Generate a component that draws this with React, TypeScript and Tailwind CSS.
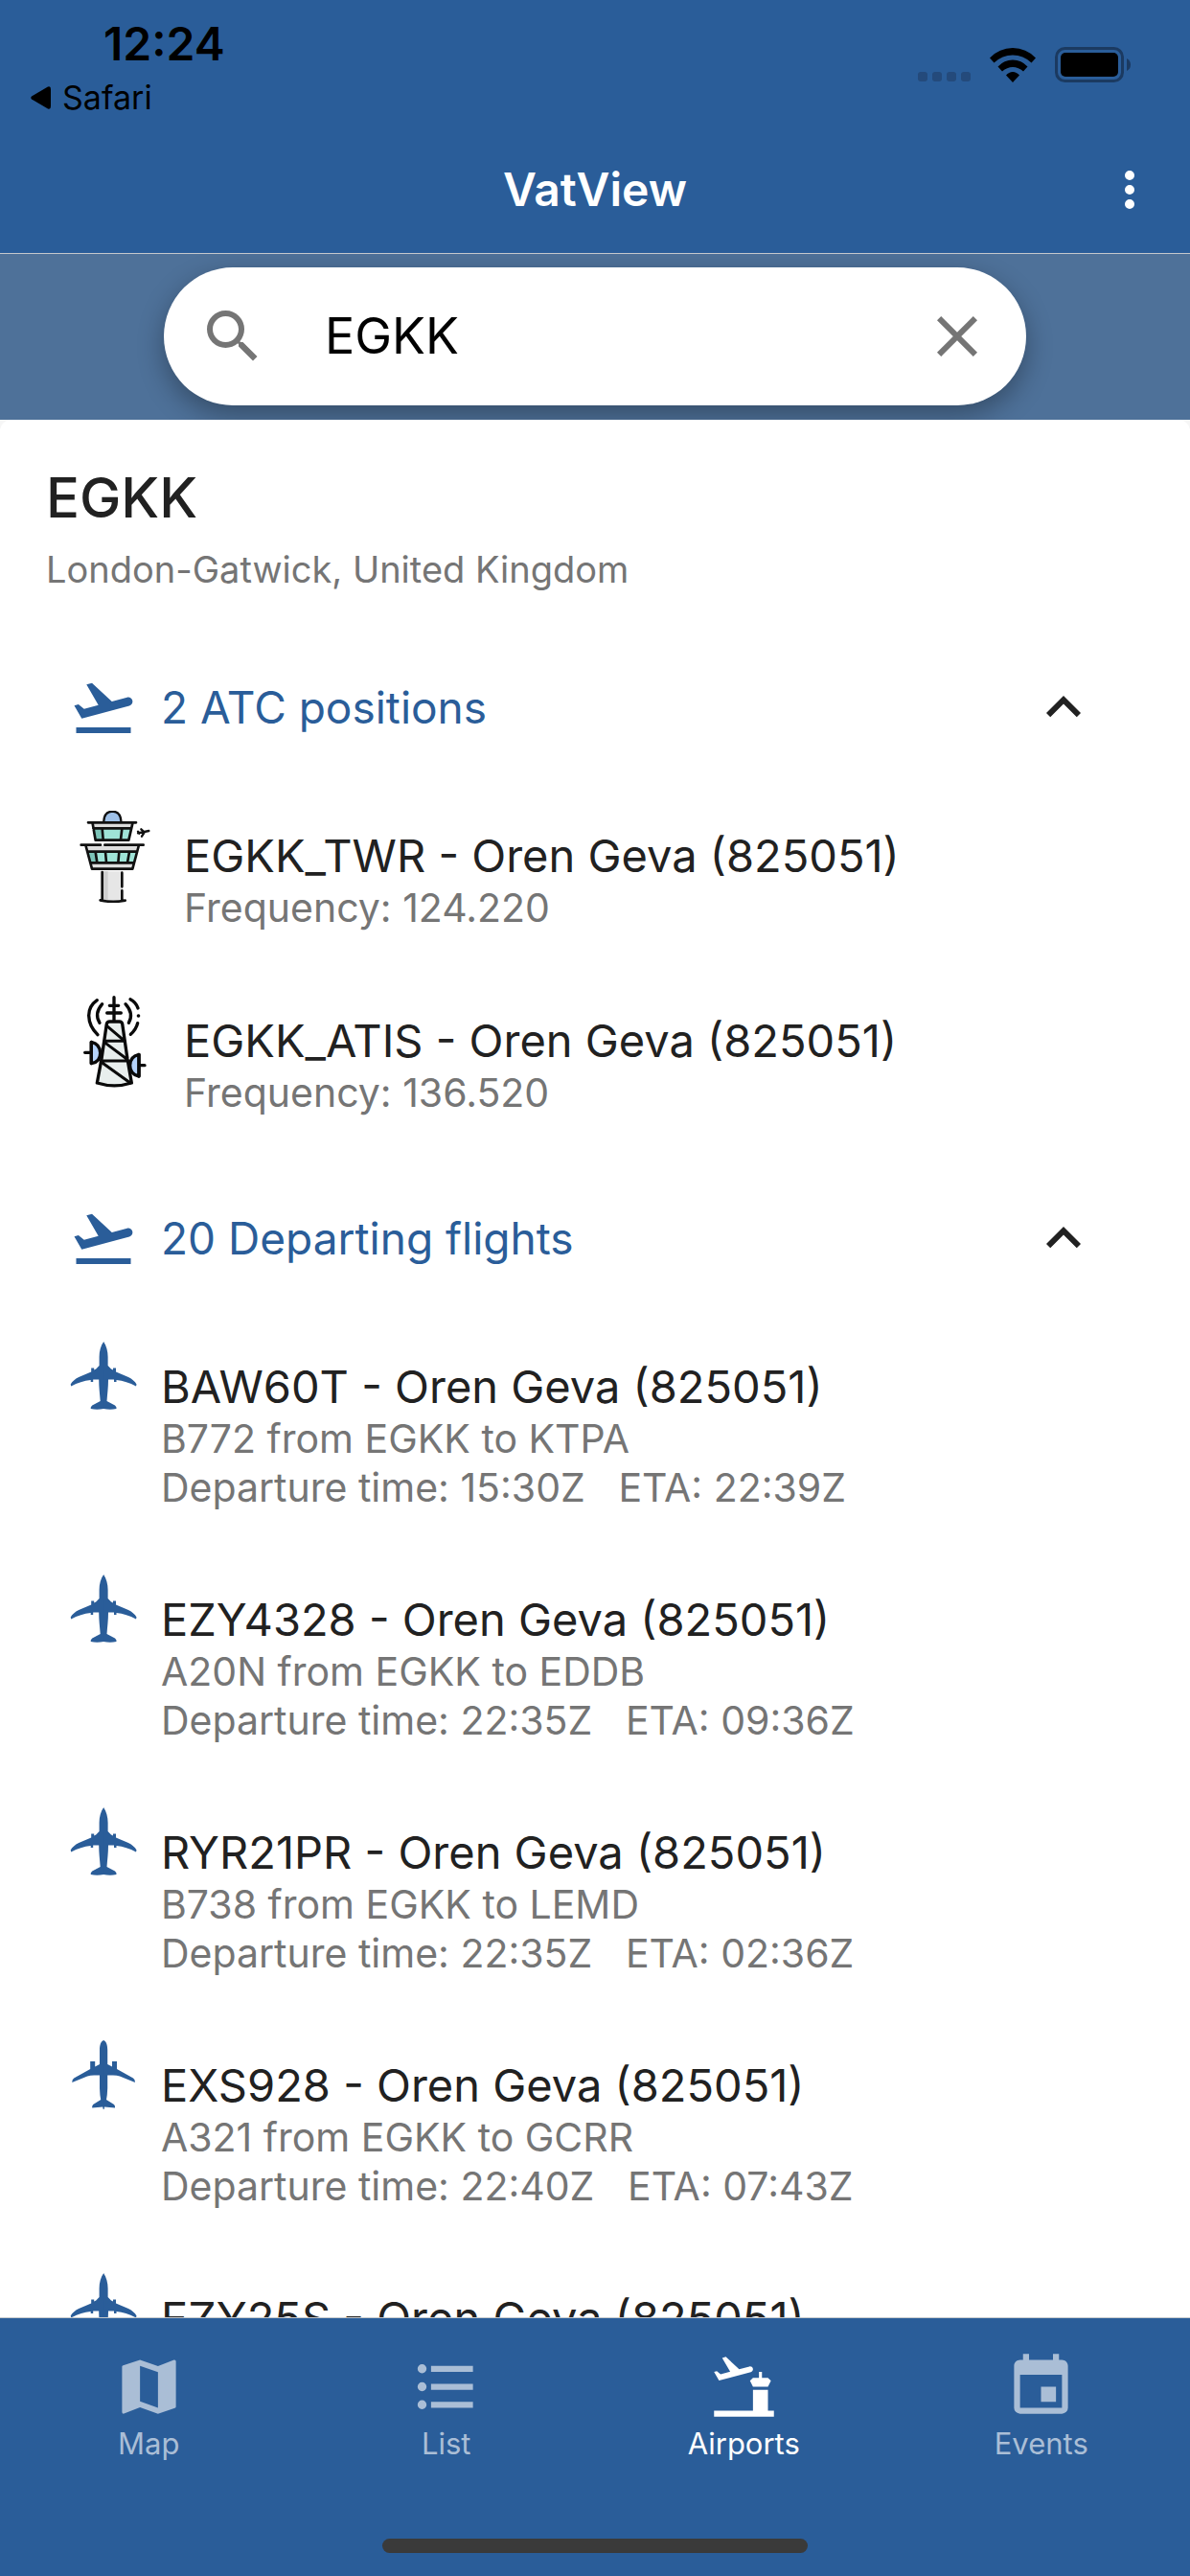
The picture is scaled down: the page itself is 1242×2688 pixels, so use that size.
import React, { useState } from 'react'

const icons = {
  magnify: 'M9.5,3A6.5,6.5 0 0,1 16,9.5C16,11.11 15.41,12.59 14.44,13.73L14.71,14H15.5L20.5,19L19,20.5L14,15.5V14.71L13.73,14.44C12.59,15.41 11.11,16 9.5,16A6.5,6.5 0 0,1 3,9.5A6.5,6.5 0 0,1 9.5,3M9.5,5C7,5 5,7 5,9.5C5,12 7,14 9.5,14C12,14 14,12 14,9.5C14,7 12,5 9.5,5Z',
  close: 'M19,6.41L17.59,5L12,10.59L6.41,5L5,6.41L10.59,12L5,17.59L6.41,19L12,13.41L17.59,19L19,17.59L13.41,12L19,6.41Z',
  dots: 'M12,16A2,2 0 0,1 14,18A2,2 0 0,1 12,20A2,2 0 0,1 10,18A2,2 0 0,1 12,16M12,10A2,2 0 0,1 14,12A2,2 0 0,1 12,14A2,2 0 0,1 10,12A2,2 0 0,1 12,10M12,4A2,2 0 0,1 14,6A2,2 0 0,1 12,8A2,2 0 0,1 10,6A2,2 0 0,1 12,4Z',
  chevronUp: 'M7.41,15.41L12,10.83L16.59,15.41L18,14L12,8L6,14L7.41,15.41Z',
  takeoff: 'M2.5,19H21.5V21H2.5V19M22.07,9.64C21.86,8.84 21.03,8.36 20.23,8.58L14.92,10L8,3.57L6.09,4.08L10.23,11.25L5.26,12.58L3.29,11.04L1.84,11.43L3.66,14.59L4.43,15.92L6.03,15.5L11.34,14.07L15.69,12.91L21,11.5C21.81,11.26 22.28,10.44 22.07,9.64Z',
  map: 'M15,19L9,16.89V5L15,7.11M20.5,3C20.44,3 20.39,3 20.34,3L15,5.1L9,3L3.36,4.9C3.15,4.97 3,5.15 3,5.38V20.5A0.5,0.5 0 0,0 3.5,21C3.55,21 3.61,21 3.66,20.97L9,18.9L15,21L20.64,19.1C20.85,19 21,18.85 21,18.62V3.5A0.5,0.5 0 0,0 20.5,3Z',
  list: 'M7,5H21V7H7V5M7,13V11H21V13H7M4,4.5A1.5,1.5 0 0,1 5.5,6A1.5,1.5 0 0,1 4,7.5A1.5,1.5 0 0,1 2.5,6A1.5,1.5 0 0,1 4,4.5M4,10.5A1.5,1.5 0 0,1 5.5,12A1.5,1.5 0 0,1 4,13.5A1.5,1.5 0 0,1 2.5,12A1.5,1.5 0 0,1 4,10.5M7,19V17H21V19H7M4,16.5A1.5,1.5 0 0,1 5.5,18A1.5,1.5 0 0,1 4,19.5A1.5,1.5 0 0,1 2.5,18A1.5,1.5 0 0,1 4,16.5Z',
  airport: 'M14.97,5.92C14.83,5.41 14.3,5.1 13.79,5.24L10.39,6.15L5.95,2.03L4.72,2.36L7.38,6.95L4.19,7.8L2.93,6.82L2,7.07L3.66,9.95L14.28,7.11C14.8,6.96 15.1,6.43 14.97,5.92M21,10L20,12H15L14,10L15,9H17V7H18V9H20L21,10M22,20V22H2V20H15V13H20V20H22Z',
  calendar: 'M19,19H5V8H19M16,1V3H8V1H6V3H5C3.89,3 3,3.89 3,5V19A2,2 0 0,0 5,21H19A2,2 0 0,0 21,19V5C21,3.89 20.1,3 19,3H18V1M17,12H12V17H17V12Z',
}

const Icon = ({ name, className }: { name: keyof typeof icons; className: string }) => (
  <svg viewBox="0 0 24 24" fill="currentColor" className={className} aria-hidden="true">
    <path d={icons[name]} />
  </svg>
)

// wide body and most narrow bodies
const JetIcon = () => {
  const half = 'M36 0C39 4 40.6 10 40.6 16V25L44 28.5L46 29.5V27.5H49V31.5L62 37Q68 40 70.5 44.5L70 46.5Q60 41 49.5 40V42H47V39.5H41C41 48 40 55 39.5 62L48 66.5Q50 68 49.5 70Q43 71.5 36 70Z'
  return (
    <svg viewBox="0 0 72 72" fill="currentColor" className="size-[72px]" aria-hidden="true">
      <path d={half} />
      <path d={half} transform="matrix(-1 0 0 1 72.2 0)" />
    </svg>
  )
}

// engines ahead of the wing
const TwinJetIcon = () => {
  const half = 'M36 0C39 1 40.2 5 40.2 10V25L45 27.5V22H50V30L67 39.5Q69 40.5 69 44L53 37.5Q50 36.5 46 36.5H40.2V50Q40 57 39 62L47 67Q48.5 68.5 48 70.5L37 69.5L36.5 72H36Z'
  return (
    <svg viewBox="0 0 72 72" fill="currentColor" className="size-[72px]" aria-hidden="true">
      <path d={half} />
      <path d={half} transform="matrix(-1 0 0 1 72.2 0)" />
    </svg>
  )
}

const TowerIcon = () => (
  <svg viewBox="36 78 288 288" className="size-24" strokeLinecap="round" strokeLinejoin="round" aria-hidden="true">
    <path d="M140 268H204V360Q172 365 140 360Z" fill="#e6e6e6" />
    <path d="M140 268H158V362L140 360Z" fill="#cfcfcf" />
    <path d="M145 112Q147 81 172 80Q197 81 199 112Z" fill="#9fc1e8" />
    <path d="M145 110Q147 81 172 80Q197 81 199 110" fill="none" stroke="#111" strokeWidth="7" />
    <path d="M106 116H236L223 173H117Z" fill="#dcdcdc" />
    <path d="M113 134H230L222 169H121Z" fill="#9fe3d7" />
    <path d="M113 134H138L140 169H121Z" fill="#7cc4b8" />
    <path d="M96 115H246M110 118L119 170M235 118L223 170M112 133H231M120 170H222M140 134L143 168M202 134L198 168" fill="none" stroke="#111" strokeWidth="8" />
    <path d="M88 187H256L236 261H108Z" fill="#dedede" />
    <path d="M95 207H249L239 240H104Z" fill="#9fe3d7" />
    <path d="M95 207H118L123 240H104Z" fill="#7cc4b8" />
    <path d="M74 185H135M148 185H269M89 189L108 260H235L254 189M96 206H248M104 241H240M119 207L124 240M150 207L153 240M193 207L190 240M225 207L219 240" fill="none" stroke="#111" strokeWidth="8" />
    <path d="M140 270V358M202 272V316M202 328V358M134 358Q172 367 212 359" fill="none" stroke="#111" strokeWidth="8" />
    <path d="M252 148L286 141M262 136L272 145M264 158L272 146M252 143L256 149" fill="none" stroke="#111" strokeWidth="7" />
  </svg>
)

const AntennaIcon = () => (
  <svg viewBox="36 72 288 288" className="size-24" fill="none" stroke="#0a0a0a" strokeLinecap="round" strokeLinejoin="round" aria-hidden="true">
    <path d="M106 217Q134 224 134 251Q134 280 106 284Z" fill="#b5d3fb" strokeWidth="10" />
    <path d="M255 256Q227 262 227 290Q227 318 255 324Z" fill="#b5d3fb" strokeWidth="10" />
    <path d="M154 160Q156 153 163 153H194Q201 153 203 160L219 270L232 345Q178 362 124 345L138 270Z" fill="#e8eeed" strokeWidth="10" />
    <path d="M147 214H210M138 276H219M154 166L208 212M147 218L217 270M136 279L228 345" strokeWidth="9" />
    <path d="M177 77V150M163 103H191M155 126H199" strokeWidth="10" />
    <path d="M86 250H104M257 290H273M106 217V284M255 256V324" strokeWidth="10" />
    <path d="M140 98Q114 128 132 157M213 98Q240 128 223 157" strokeWidth="10" />
    <path d="M124 86Q98 104 98 134Q99 169 126 194M228 83Q246 92 252 111M251 158Q246 178 229 193M253 135H254" strokeWidth="10" />
  </svg>
)

const StatusBar = () => (
  <div className="flex h-[132px] items-start justify-between pl-8 pr-[61px] text-black">
    <div>
      <div className="pt-4 pl-[76px] text-[48px] leading-[60px] font-semibold">12:24</div>
      <a href="#" className="flex items-center gap-[12px] text-[34px] leading-[52px]">
        <svg viewBox="0 0 21 24" className="h-6 w-[21px]" aria-hidden="true">
          <path d="M1 10.5L18 .5Q21 -.5 21 3V21Q21 24.500 18 23.500L1 13.500Q-.5 12 1 10.500Z" />
        </svg>
        Safari
      </a>
    </div>
    <div className="flex items-end gap-5 pt-[49px]">
      <div className="flex gap-[5px] pb-px">
        {[0, 1, 2, 3].map((dot) => (
          <span key={dot} className="size-[10px] rounded-[3px] bg-[#244a7b]" />
        ))}
      </div>
      <svg viewBox="0 0 48 36" className="h-9 w-12" aria-hidden="true">
        <path d="M0 10.500Q10 0 24 0T48 10.500L43.500 15.500Q35 7.500 24 7.500T4.500 15.500ZM8.500 19.500Q15 12.500 24 12.500T39.500 19.500L35 24.500Q30 20 24 20T13 24.500ZM17 28.500Q20 25 24 25T31 28.500L24 36Z" />
      </svg>
      <svg viewBox="0 0 80 37" className="h-[37px] w-20" aria-hidden="true">
        <rect x="1.500" y="1.500" width="69" height="34" rx="9" fill="none" stroke="#1b3a61" strokeWidth="3" />
        <rect x="6" y="6" width="60" height="25" rx="5" />
        <path d="M75 12Q79 14 79 18.500T75 25Z" fill="#1b3a61" />
      </svg>
    </div>
  </div>
)

const Header = () => (
  <header className="border-b border-[#c4c8cc] bg-[#2a5d99]">
    <StatusBar />
    <div className="grid h-[132px] grid-cols-[1fr_auto_1fr] items-center">
      <h1 className="col-start-2 text-[48px] leading-[60px] font-semibold text-white">VatView</h1>
      <button type="button" aria-label="Menu" className="mr-[33px] justify-self-end text-white">
        <Icon name="dots" className="size-[60px]" />
      </button>
    </div>
  </header>
)

const SearchBar = () => {
  const [query, setQuery] = useState('EGKK')
  return (
    <div className="flex justify-center overflow-hidden bg-[#4e7199] px-12 pt-[14px] pb-[15px]">
      <div className="flex h-36 w-[900px] items-center rounded-full bg-white px-9 text-[#757575] shadow-[0_10px_28px_rgba(0,0,0,0.32)]">
        <button type="button" aria-label="Search">
          <Icon name="magnify" className="size-[72px]" />
        </button>
        <input
          type="text"
          aria-label="Search airport"
          value={query}
          onChange={(e) => setQuery(e.target.value)}
          className="min-w-0 flex-1 bg-transparent pl-[60px] text-[52px] text-black outline-none"
        />
        <button type="button" aria-label="Clear" onClick={() => setQuery('')}>
          <Icon name="close" className="size-[72px]" />
        </button>
      </div>
    </div>
  )
}

const Accordion = ({ title, children }: { title: string; children: React.ReactNode }) => {
  const [open, setOpen] = useState(true)
  return (
    <section>
      <button
        type="button"
        aria-expanded={open}
        onClick={() => setOpen(!open)}
        className="flex w-full items-center gap-6 py-12 pr-24 pl-[72px] text-left text-[#2a5d99]"
      >
        <Icon name="takeoff" className="size-[72px]" />
        <span className="flex-1 text-[46px] leading-[60px]">{title}</span>
        <Icon name="chevronUp" className="size-[72px] text-[#212121]" />
      </button>
      {open && <ul>{children}</ul>}
    </section>
  )
}

const positions = [
  { callsign: 'EGKK_TWR', frequency: '124.220', icon: <TowerIcon /> },
  { callsign: 'EGKK_ATIS', frequency: '136.520', icon: <AntennaIcon /> },
]

const flights = [
  { callsign: 'BAW60T', route: 'B772 from EGKK to KTPA', times: 'Departure time: 15:30Z   ETA: 22:39Z', icon: <JetIcon /> },
  { callsign: 'EZY4328', route: 'A20N from EGKK to EDDB', times: 'Departure time: 22:35Z   ETA: 09:36Z', icon: <JetIcon /> },
  { callsign: 'RYR21PR', route: 'B738 from EGKK to LEMD', times: 'Departure time: 22:35Z   ETA: 02:36Z', icon: <JetIcon /> },
  { callsign: 'EXS928', route: 'A321 from EGKK to GCRR', times: 'Departure time: 22:40Z   ETA: 07:43Z', icon: <TwinJetIcon /> },
  { callsign: 'EZY25S', icon: <JetIcon /> },
]

const Airport = () => (
  <div className="rounded-t-xl bg-white">
    <div className="px-12 pt-9 pb-[30px]">
      <h2 className="text-[58px] leading-[90px] font-medium text-[#212121]">EGKK</h2>
      <p className="text-[38px] leading-[60px] text-[#757575]">London-Gatwick, United Kingdom</p>
    </div>
    <Accordion title="2 ATC positions">
      {positions.map((p) => (
        <li key={p.callsign} className="flex min-h-[193px] gap-6 pl-[72px]">
          <div className="pt-6">{p.icon}</div>
          <div className="pt-[42px] pb-[41px]">
            <p className="text-[47px] leading-[58px] text-[#212121]">{p.callsign} - Oren Geva (825051)</p>
            <p className="text-[41px] leading-[51px] text-[#757575]">Frequency: {p.frequency}</p>
          </div>
        </li>
      ))}
    </Accordion>
    <Accordion title="20 Departing flights">
      {flights.map((f) => (
        <li key={f.callsign} className="flex gap-6 pl-[72px]">
          <div className="pt-6 text-[#2a5d99]">{f.icon}</div>
          <div className="pt-[42px] pb-[41px]">
            <p className="text-[47px] leading-[58px] text-[#212121]">{f.callsign} - Oren Geva (825051)</p>
            {f.route && <p className="text-[41px] leading-[51px] text-[#757575]">{f.route}</p>}
            {f.times && <p className="text-[41px] leading-[51px] whitespace-pre text-[#757575]">{f.times}</p>}
          </div>
        </li>
      ))}
    </Accordion>
  </div>
)

const tabs: { label: string; icon: keyof typeof icons; active?: boolean }[] = [
  { label: 'Map', icon: 'map' },
  { label: 'List', icon: 'list' },
  { label: 'Airports', icon: 'airport', active: true },
  { label: 'Events', icon: 'calendar' },
]

const TabBar = () => (
  <footer className="border-t border-[#c4c8cc] bg-[#2a5d99] pb-6">
    <nav className="grid h-[230px] grid-cols-4 pt-[34px]">
      {tabs.map((tab) => (
        <a
          key={tab.label}
          href={`#${tab.label.toLowerCase()}`}
          className={`flex flex-col items-center ${tab.active ? 'text-white' : 'text-[#aabed6]'}`}
        >
          <Icon name={tab.icon} className="size-[75px]" />
          <span className="text-[31px] leading-[44px]">{tab.label}</span>
        </a>
      ))}
    </nav>
    <div className="mx-auto h-[15px] w-[444px] rounded-full bg-[#3a3a3a]" />
  </footer>
)

const App = () => {
  return (
    <div className="flex h-screen flex-col bg-[#f6f6f6] font-['Inter',sans-serif]">
      <Header />
      <SearchBar />
      <main className="min-h-0 flex-1 overflow-hidden">
        <Airport />
      </main>
      <TabBar />
    </div>
  )
}

export default App
